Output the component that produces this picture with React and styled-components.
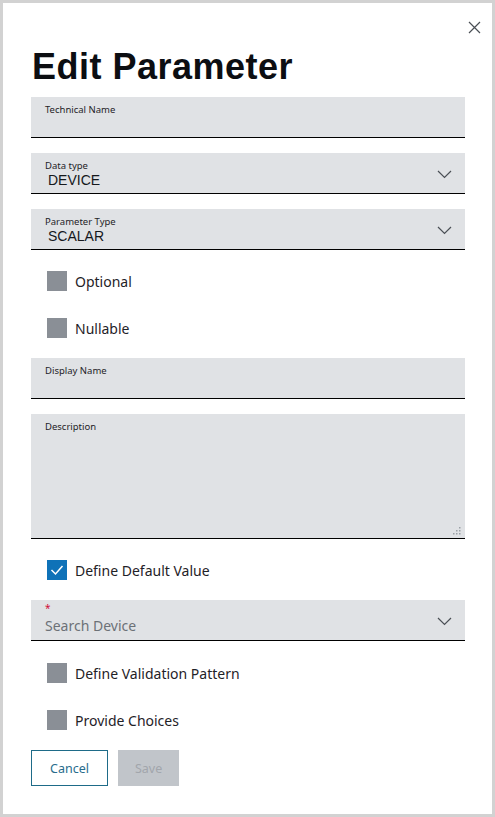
import React from 'react'
import styled, { createGlobalStyle } from 'styled-components'

const Global = createGlobalStyle`
  html, body {
    margin: 0;
    padding: 0;
    background: #cfcfcf;
  }
  * { box-sizing: border-box; }
`

const Dialog = styled.div`
  position: relative;
  width: 495px;
  height: 817px;
  border: 3px solid #d2d2d2;
  background: #fff;
  padding: 0 27px 0 28px;
  font-family: "Noto Sans", "Open Sans", sans-serif;
  color: #1f2227;
  overflow: hidden;
`

const Close = styled.button`
  position: absolute;
  top: 14px;
  right: 8px;
  width: 20px;
  height: 20px;
  padding: 0;
  border: none;
  background: none;
  display: flex;
  align-items: center;
  justify-content: center;
`

const Title = styled.h1`
  margin: 42px 0 8px 1px;
  font-family: "Liberation Sans", Arial, sans-serif;
  font-weight: bold;
  font-size: 36px;
  line-height: 44px;
  color: #0c0e12;
  letter-spacing: 0.5px;
`

const Field = styled.div`
  position: relative;
  height: ${p => p.tall ? 125 : 41}px;
  background: #e0e2e5;
  border-bottom: 1px solid #000;
  padding: ${p => p.compact ? 3 : 7}px 14px 0 14px;
  margin-bottom: ${p => p.last ? 0 : 15}px;
  display: flex;
  flex-direction: column;
`

const Label = styled.span`
  font-size: 9.5px;
  line-height: 12px;
  color: #1f2227;
`

const Value = styled.span`
  font-family: "Liberation Sans", Arial, sans-serif;
  font-size: 14px;
  line-height: 17px;
  margin-left: 3px;
  color: #15181c;
`

const Required = styled.span`
  color: #d0103a;
  font-size: 10px;
  line-height: 10px;
  height: 10px;
`

const Placeholder = styled.span`
  margin-top: 4px;
  font-size: 14px;
  line-height: 18px;
  color: #6c7177;
`

const Chevron = styled.svg`
  position: absolute;
  right: 13px;
  top: 17px;
`

const Grip = styled.svg`
  position: absolute;
  right: 4px;
  bottom: 3px;
`

const CheckGroup = styled.div`
  display: flex;
  flex-direction: column;
  gap: 27px;
  padding: ${p => p.top || 21}px 0 20px 16px;
`

const CheckRow = styled.label`
  display: flex;
  align-items: center;
  gap: 8px;
  height: 20px;
  font-size: 14px;
  color: #1f2227;
`

const Box = styled.span`
  width: 20px;
  height: 20px;
  background: ${p => p.checked ? '#0f72b8' : '#8a8f96'};
  display: flex;
  align-items: center;
  justify-content: center;
`

const Actions = styled.div`
  display: flex;
  gap: 10px;
`

const Button = styled.button`
  height: 36px;
  padding: 0 ${p => p.primary ? 16 : 18}px;
  font-family: "Noto Sans", "Open Sans", sans-serif;
  font-size: 12.5px;
  border: 1px solid ${p => p.primary ? '#c1c5ca' : '#1e6b88'};
  background: ${p => p.primary ? '#c1c5ca' : '#fff'};
  color: ${p => p.primary ? '#a2a6ac' : '#286c8c'};
`

const ChevronIcon = () => (
  <Chevron width="15" height="9" viewBox="0 0 15 9">
    <polyline points="1,1 7.5,7.5 14,1" fill="none" stroke="#4a4f55" strokeWidth="1.2" />
  </Chevron>
)

const Check = ({ label, checked }) => (
  <CheckRow>
    <Box checked={checked}>
      {checked && (
        <svg width="14" height="12" viewBox="0 0 14 12">
          <polyline points="1.5,6 5.5,10 12.5,2" fill="none" stroke="#fff" strokeWidth="1.5" />
        </svg>
      )}
    </Box>
    {label}
  </CheckRow>
)

export default function App() {
  return (
    <>
      <Global />
      <Dialog>
        <Close aria-label="close">
          <svg width="13" height="13" viewBox="0 0 13 13">
            <path d="M1 1 L12 12 M12 1 L1 12" stroke="#4a4f55" strokeWidth="1.2" />
          </svg>
        </Close>
        <Title>Edit Parameter</Title>

        <Field>
          <Label>Technical Name</Label>
        </Field>
        <Field>
          <Label>Data type</Label>
          <Value>DEVICE</Value>
          <ChevronIcon />
        </Field>
        <Field last>
          <Label>Parameter Type</Label>
          <Value>SCALAR</Value>
          <ChevronIcon />
        </Field>

        <CheckGroup>
          <Check label="Optional" />
          <Check label="Nullable" />
        </CheckGroup>

        <Field>
          <Label>Display Name</Label>
        </Field>
        <Field tall last>
          <Label>Description</Label>
          <Grip width="9" height="9" viewBox="0 0 9 9">
            <g fill="#9aa0a6">
              <rect x="7" y="1" width="1.5" height="1.5" />
              <rect x="4" y="4" width="1.5" height="1.5" />
              <rect x="7" y="4" width="1.5" height="1.5" />
              <rect x="1" y="7" width="1.5" height="1.5" />
              <rect x="4" y="7" width="1.5" height="1.5" />
              <rect x="7" y="7" width="1.5" height="1.5" />
            </g>
          </Grip>
        </Field>

        <CheckGroup top={21}>
          <Check label="Define Default Value" checked />
        </CheckGroup>

        <Field last compact>
          <Required>*</Required>
          <Placeholder>Search Device</Placeholder>
          <ChevronIcon />
        </Field>

        <CheckGroup top={22}>
          <Check label="Define Validation Pattern" />
          <Check label="Provide Choices" />
        </CheckGroup>

        <Actions>
          <Button>Cancel</Button>
          <Button primary>Save</Button>
        </Actions>
      </Dialog>
    </>
  )
}
